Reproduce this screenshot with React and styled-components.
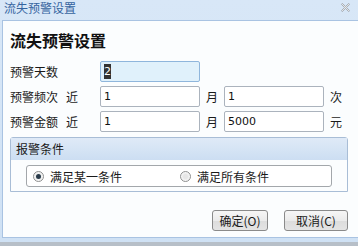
import React from "react";
import styled, { createGlobalStyle } from "styled-components";

const Global = createGlobalStyle`
  html, body { margin: 0; padding: 0; background: #ffffff; }
  body { font-family: "Noto Sans CJK SC", "Liberation Sans", sans-serif; font-size: 12px; }
`;

const cjk = `"Noto Sans CJK SC", "Liberation Sans", sans-serif`;

const Window = styled.div`
  width: 358px;
  height: 246px;
  box-sizing: border-box;
  display: flex;
  flex-direction: column;
  background: linear-gradient(#d8e7f7, #cfe1f4);
  border-bottom: 4px solid #b7bfc8;
  overflow: hidden;
`;

const TitleBar = styled.div`
  height: 20px;
  flex: none;
  display: flex;
  align-items: flex-start;
  justify-content: space-between;
  padding: 1px 8px 0 4px;
  box-sizing: border-box;
`;

const Title = styled.span`
  font-family: ${cjk};
  font-size: 12px;
  line-height: 14px;
  color: #35649f;
`;

const Close = styled.svg`
  margin-top: 2px;
  width: 9px;
  height: 9px;
`;

const Body = styled.div`
  flex: 1;
  display: flex;
  padding: 0 3px 4px 2px;
`;

const Panel = styled.div`
  flex: 1;
  box-sizing: border-box;
  border: 1px solid #a9c3e2;
  background: #fbfdfe;
  padding: 0 13px 0 7px;
  display: flex;
  flex-direction: column;
`;

const Heading = styled.h1`
  margin: 9px 0 0;
  font-family: ${cjk};
  font-size: 16px;
  line-height: 20px;
  font-weight: bold;
  color: #111;
`;

const Rows = styled.div`
  margin-top: 11px;
  display: flex;
  flex-direction: column;
  gap: 4px;
`;

const Row = styled.div`
  display: flex;
  align-items: center;
  height: 21px;
`;

const Label = styled.span`
  width: 90px;
  flex: none;
  display: flex;
  gap: 8px;
  font-family: ${cjk};
  font-size: 12px;
  color: #1a1a1a;
`;

const Field = styled.div`
  width: 100px;
  height: 21px;
  box-sizing: border-box;
  border: 1px solid ${p => (p.focused ? "#8fb6dc" : "#abb3bd")};
  border-radius: 2px;
  background: ${p => (p.focused ? "#e0f1fb" : "#ffffff")};
  font-family: "DejaVu Sans", sans-serif;
  font-size: 11px;
  line-height: 19px;
  padding-left: 3px;
  color: #111;
`;

const Selected = styled.span`
  background: #333333;
  color: #ffffff;
  padding: 1px 0;
`;

const Unit = styled.span`
  width: 24px;
  flex: none;
  text-align: center;
  font-family: ${cjk};
  font-size: 12px;
  color: #1a1a1a;
`;

const Fieldset = styled.div`
  margin-top: 5px;
  border: 1px solid #a8bdd6;
  border-radius: 3px 3px 0 0;
  display: flex;
  flex-direction: column;
`;

const Legend = styled.div`
  height: 22px;
  background: linear-gradient(#dfeaf7, #ccdef2);
  padding-left: 5px;
  font-family: ${cjk};
  font-size: 12px;
  line-height: 22px;
  color: #1a1a1a;
`;

const RadioGroup = styled.div`
  margin: 5px 15px 4px;
  height: 22px;
  box-sizing: border-box;
  border: 1px solid #a3a7ab;
  border-radius: 3px;
  background: #ffffff;
  display: flex;
  align-items: center;
`;

const Option = styled.label`
  width: 147px;
  box-sizing: border-box;
  padding-left: 6px;
  display: flex;
  align-items: center;
  gap: 6px;
  font-family: ${cjk};
  font-size: 12px;
  color: #1a1a1a;
`;

const Dot = styled.span`
  width: 11px;
  height: 11px;
  box-sizing: border-box;
  border-radius: 50%;
  border: 1px solid #8e8f8f;
  background: radial-gradient(circle, #e6e6e6 30%, #f8f8f8 70%);
  display: flex;
  align-items: center;
  justify-content: center;
  &::after {
    content: "";
    width: 5px;
    height: 5px;
    border-radius: 50%;
    background: ${p => (p.checked ? "#2a3b4a" : "transparent")};
  }
`;

const Buttons = styled.div`
  margin-top: 18px;
  display: flex;
  justify-content: flex-end;
  gap: 16px;
`;

const Button = styled.button`
  width: ${p => p.w}px;
  height: 21px;
  box-sizing: border-box;
  border: 1px solid #8a8a8a;
  border-radius: 3px;
  background: linear-gradient(#f6f6f6 0%, #ebebeb 50%, #dcdcdc 51%, #e4e4e4 100%);
  font-family: ${cjk};
  font-size: 12px;
  color: #1a1a1a;
  padding: 0;
  line-height: 19px;
`;

export default function App() {
  return (
    <>
      <Global />
      <Window>
        <TitleBar>
          <Title>流失预警设置</Title>
          <Close viewBox="0 0 10 10">
            <polygon
              points="0.5,1.5 1.5,0.5 5,4 8.5,0.5 9.5,1.5 6,5 9.5,8.5 8.5,9.5 5,6 1.5,9.5 0.5,8.5 4,5"
              fill="#f2f4f6"
              stroke="#8a8f96"
              strokeWidth="0.8"
            />
          </Close>
        </TitleBar>
        <Body>
          <Panel>
            <Heading>流失预警设置</Heading>
            <Rows>
              <Row>
                <Label>预警天数</Label>
                <Field focused>
                  <Selected>2</Selected>
                </Field>
              </Row>
              <Row>
                <Label>
                  <span>预警频次</span>
                  <span>近</span>
                </Label>
                <Field>1</Field>
                <Unit>月</Unit>
                <Field>1</Field>
                <Unit>次</Unit>
              </Row>
              <Row>
                <Label>
                  <span>预警金额</span>
                  <span>近</span>
                </Label>
                <Field>1</Field>
                <Unit>月</Unit>
                <Field>5000</Field>
                <Unit>元</Unit>
              </Row>
            </Rows>
            <Fieldset>
              <Legend>报警条件</Legend>
              <RadioGroup>
                <Option>
                  <Dot checked />
                  满足某一条件
                </Option>
                <Option>
                  <Dot />
                  满足所有条件
                </Option>
              </RadioGroup>
            </Fieldset>
            <Buttons>
              <Button w={56}>确定(O)</Button>
              <Button w={64}>取消(C)</Button>
            </Buttons>
          </Panel>
        </Body>
      </Window>
    </>
  );
}
